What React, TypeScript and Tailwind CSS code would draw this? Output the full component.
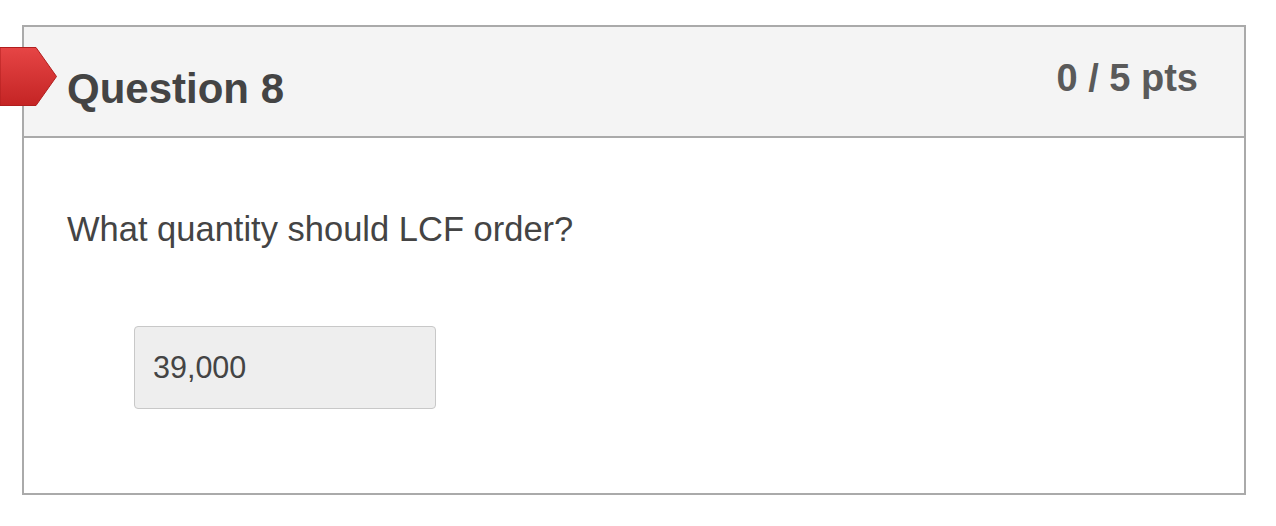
import React from "react";

export default function App() {
  return (
    <div className="relative w-[1276px] h-[526px] bg-white" style={{ fontFamily: '"Liberation Sans", Arial, sans-serif' }}>
      <div className="pt-[25px] pl-[22px]">
        <div className="w-[1224px] h-[470px] border-2 border-[#aaaaaa] flex flex-col">
          <div className="h-[111px] bg-[#f4f4f4] border-b-2 border-[#aaaaaa] flex justify-between items-start pl-[43px] pr-[46px]">
            <div className="mt-[41px] text-[42px] leading-[42px] font-bold text-[#444444]">Question 8</div>
            <div className="mt-[32px] text-[38px] leading-[38px] font-bold text-[#5a5a5a]">0 / 5 pts</div>
          </div>
          <div className="flex-1 pl-[43px] pt-[74px]">
            <div className="text-[34.5px] leading-[34px] text-[#444444]">What quantity should LCF order?</div>
            <div className="mt-[80px] ml-[67px] w-[302px] h-[83px] bg-[#eeeeee] border border-[#c8c8c8] rounded-[4px] flex items-center pl-[18px] text-[30.5px] text-[#444444]">
              39,000
            </div>
          </div>
        </div>
      </div>
      <svg className="absolute left-0 top-[47px]" width="58" height="60" viewBox="0 0 58 60">
        <defs>
          <linearGradient id="flag" x1="0" y1="0" x2="0" y2="1">
            <stop offset="0" stopColor="#e64545" />
            <stop offset="1" stopColor="#c42424" />
          </linearGradient>
        </defs>
        <polygon points="0,0.5 36,0.5 56.5,29.5 36,58.5 0,58.5" fill="url(#flag)" stroke="#b01e1e" strokeWidth="1" />
      </svg>
    </div>
  );
}
